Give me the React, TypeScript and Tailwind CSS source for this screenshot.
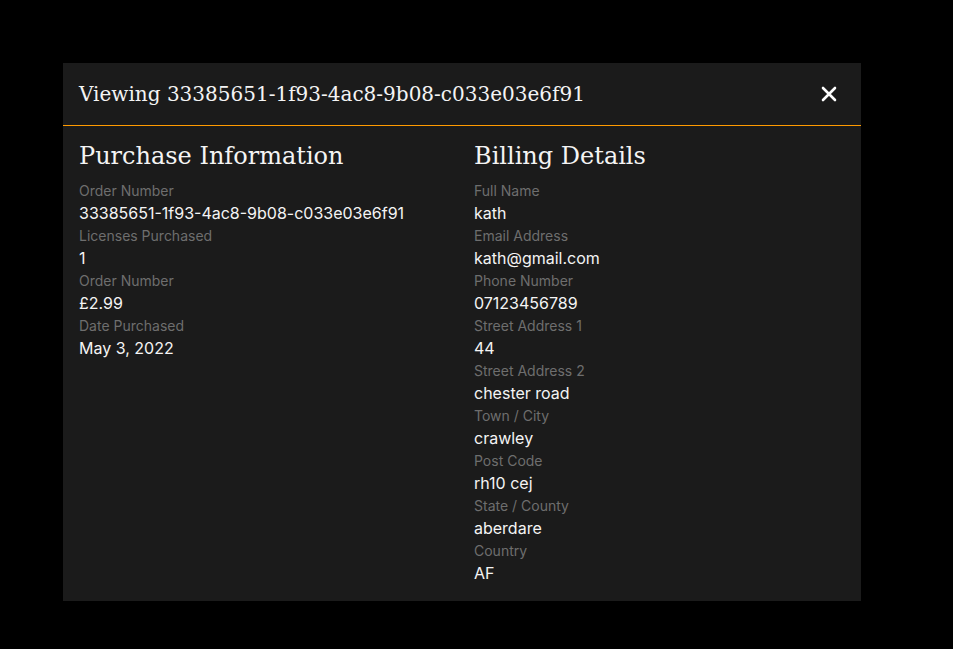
const purchase = [
  { label: "Order Number", value: "33385651-1f93-4ac8-9b08-c033e03e6f91" },
  { label: "Licenses Purchased", value: "1" },
  { label: "Order Number", value: "£2.99" },
  { label: "Date Purchased", value: "May 3, 2022" },
];

const billing = [
  { label: "Full Name", value: "kath" },
  { label: "Email Address", value: "kath@gmail.com" },
  { label: "Phone Number", value: "07123456789" },
  { label: "Street Address 1", value: "44" },
  { label: "Street Address 2", value: "chester road" },
  { label: "Town / City", value: "crawley" },
  { label: "Post Code", value: "rh10 cej" },
  { label: "State / County", value: "aberdare" },
  { label: "Country", value: "AF" },
];

function Field({ label, value }: { label: string; value: string }) {
  return (
    <div className="flex flex-col">
      <span className="text-[14px] leading-[21px] text-[#6e6e6e]">{label}</span>
      <span className="text-[16px] leading-[24px] text-[#f4f4f4]">{value}</span>
    </div>
  );
}

function Section({ title, items }: { title: string; items: { label: string; value: string }[] }) {
  return (
    <div className="flex flex-col">
      <h2 className="font-['DejaVu_Serif',serif] text-[24px] leading-[36px] text-[#f4f4f4] mb-[6px]">
        {title}
      </h2>
      {items.map((it, idx) => (
        <Field key={idx} {...it} />
      ))}
    </div>
  );
}

export default function App() {
  return (
    <div className="w-full min-h-[649px] bg-black pt-[63px] pl-[63px] font-['Inter','Liberation_Sans',sans-serif]">
      <div className="w-[798px] bg-[#1b1b1b]">
        {/* header */}
        <div className="flex items-center justify-between px-4 pt-4 pb-4 border-b border-solid border-amber-500">
          <h1 className="font-['DejaVu_Serif',serif] text-[20px] leading-[30px] text-[#f4f4f4]">
            Viewing 33385651-1f93-4ac8-9b08-c033e03e6f91
          </h1>
          <button className="mr-[8px] text-white">
            <svg width="16" height="16" viewBox="0 0 16 16" fill="none">
              <path d="M2 2L14 14M14 2L2 14" stroke="currentColor" strokeWidth="2.6" strokeLinecap="round" />
            </svg>
          </button>
        </div>

        {/* body */}
        <div className="grid grid-cols-2 gap-6 px-4 pt-3 pb-4">
          <Section title="Purchase Information" items={purchase} />
          <Section title="Billing Details" items={billing} />
        </div>
      </div>
    </div>
  );
}
